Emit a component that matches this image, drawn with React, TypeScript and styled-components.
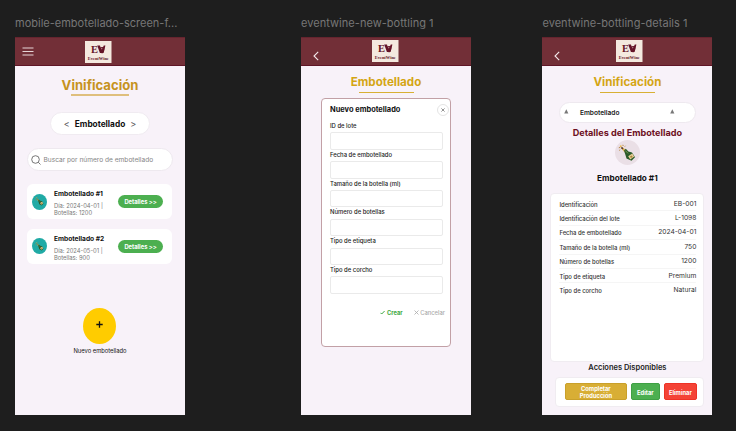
import React from 'react';
import styled, { createGlobalStyle, css } from 'styled-components';

const GlobalStyle = createGlobalStyle`
  * { box-sizing: border-box; }
  body {
    margin: 0;
    background: #1e1e1e;
    font-family: Inter, "Liberation Sans", sans-serif;
    overflow: hidden;
  }
  button { font-family: inherit; border: 0; padding: 0; margin: 0; }
  svg { display: block; flex: none; }
`;

type TextProps = { $size: number; $track?: number };
const type = css<TextProps>`
  font-size: ${p => p.$size}px;
  letter-spacing: ${p => p.$track ?? 0}px;
  white-space: nowrap;
`;

const Canvas = styled.main`
  width: 736px;
  height: 431px;
  display: grid;
  grid-template-columns: 286px 241.4px 171px;
  padding: 15px 0 0 15px;
  background: #1e1e1e;
`;
const Board = styled.section`
  display: flex;
  flex-direction: column;
`;
const BoardName = styled.div<TextProps>`
  ${type}
  height: 22px;
  line-height: 16px;
  color: #777;
`;
const Screen = styled.div`
  width: 170px;
  height: 378px;
  background: #f8f2f9;
  display: flex;
  flex-direction: column;
  align-items: center;
`;
const Header = styled.header<{ $top: number; $logoX: number }>`
  width: 100%;
  height: 29px;
  flex: none;
  display: grid;
  grid-template-columns: ${p => p.$logoX}px 27px 1fr;
  align-items: start;
  padding-top: ${p => p.$top}px;
  background: #722f37;
  border-top: 1px solid #65242e;
  border-bottom: 1px solid #5f1526;
`;
const NavSlot = styled.div<{ $left: number; $top: number }>`
  padding: ${p => p.$top}px 0 0 ${p => p.$left}px;
`;
const Title = styled.h1<TextProps & { $top: number; $color: string }>`
  ${type}
  margin: ${p => p.$top}px 0 0;
  height: 18px;
  line-height: 18px;
  font-weight: 700;
  color: ${p => p.$color};
`;
const Rule = styled.div<{ $w: number; $h: number; $color: string; $top: number }>`
  width: ${p => p.$w}px;
  height: ${p => p.$h}px;
  margin-top: ${p => p.$top}px;
  background: ${p => p.$color};
  flex: none;
`;

/* list screen */
const Switcher = styled.div`
  width: 100px;
  height: 23px;
  margin-top: 16px;
  border: 1px solid #f0ebf1;
  border-radius: 12px;
  background: #fff;
  display: flex;
  align-items: center;
  justify-content: center;
  gap: 5px;
`;
const SwitchText = styled.span<TextProps>`
  ${type}
  font-weight: 700;
  color: #111;
`;
const Chevron = styled.span`
  font-size: 9px;
  color: #555;
`;
const Search = styled.label`
  width: 146px;
  height: 23px;
  margin: 13px 1px 0 0;
  padding-left: 3px;
  border: 1px solid #eee9ef;
  border-radius: 12px;
  background: #fff;
  display: flex;
  align-items: center;
  gap: 3px;
`;
const Placeholder = styled.span<TextProps>`
  ${type}
  color: #858585;
`;
const Card = styled.article<{ $top: number }>`
  width: 145px;
  height: 35px;
  margin: ${p => p.$top}px 1px 0 0;
  padding: 0 9px 0 5px;
  border-radius: 6px;
  background: #fff;
  display: grid;
  grid-template-columns: 22px 1fr 45px;
  align-items: center;
`;
const Avatar = styled.div`
  width: 15px;
  height: 16px;
  border-radius: 50%;
  background: #20aaa5;
  display: flex;
  align-items: center;
  justify-content: center;
`;
const CardText = styled.div`
  align-self: start;
  padding-top: 5px;
`;
const CardTitle = styled.div<TextProps>`
  ${type}
  font-weight: 700;
  line-height: 10px;
  color: #111;
`;
const CardMeta = styled.div<TextProps>`
  ${type}
  line-height: 7px;
  margin-top: 3px;
  color: #777;
`;
const DetailButton = styled.button<TextProps>`
  ${type}
  height: 13px;
  border-radius: 7px;
  background: #4caf50;
  color: #fff;
  font-weight: 700;
`;
const AddButton = styled.button`
  width: 33px;
  height: 36px;
  margin: 44px 1px 0 0;
  border-radius: 50%;
  background: #ffcc00;
  display: flex;
  align-items: center;
  justify-content: center;
  padding-bottom: 3px;
  flex: none;
`;
const AddLabel = styled.div<TextProps>`
  ${type}
  line-height: 8px;
  margin-top: 3px;
  color: #111;
`;

/* form screen */
const Modal = styled.form`
  width: 130px;
  height: 249px;
  margin-top: 5px;
  padding: 4px 0 0 8px;
  border: 1px solid #c2a0a6;
  border-radius: 4px;
  background: #fff;
`;
const ModalHead = styled.div`
  height: 13px;
  display: flex;
  align-items: center;
  justify-content: space-between;
  padding-right: 1px;
`;
const ModalTitle = styled.h2<TextProps>`
  ${type}
  margin: 0;
  font-weight: 700;
  color: #111;
`;
const Close = styled.button`
  width: 12px;
  height: 12px;
  border: 1px solid #e4e4e4;
  border-radius: 50%;
  background: #fff;
  display: flex;
  align-items: center;
  justify-content: center;
`;
const Fields = styled.div`
  padding-top: 6px;
`;
const Field = styled.label`
  display: block;
  height: 28.8px;
`;
const FieldName = styled.div<TextProps>`
  ${type}
  height: 10.4px;
  line-height: 8px;
  font-weight: 500;
  color: #222;
`;
const Input = styled.input`
  display: block;
  width: 113px;
  height: 17.5px;
  padding: 0;
  border: 1px solid #eaeaea;
  border-radius: 2px;
  background: #fff;
`;
const FormActions = styled.div`
  display: flex;
  justify-content: flex-end;
  gap: 11px;
  padding: 14px 5px 0 0;
`;
const FormAction = styled.button<TextProps & { $main?: boolean }>`
  ${type}
  height: 8px;
  line-height: 8px;
  background: none;
  display: flex;
  align-items: center;
  gap: 1.5px;
  color: ${p => (p.$main ? '#3fa944' : '#aaa')};
  font-weight: ${p => (p.$main ? 700 : 500)};
`;

/* details screen */
const Picker = styled.div`
  width: 137px;
  height: 21px;
  margin-top: 9px;
  padding: 0 20px 0 4px;
  border: 1px solid #eee9ef;
  border-radius: 11px;
  background: #fff;
  display: grid;
  grid-template-columns: 16px 1fr 5px;
  align-items: center;
`;
const PickerText = styled.span<TextProps>`
  ${type}
  font-weight: 600;
  color: #222;
`;
const PickerMark = styled.span`
  padding-bottom: 2px;
`;
const Section = styled.h2<TextProps>`
  ${type}
  margin: 2px 0 0;
  line-height: 15px;
  height: 15px;
  font-weight: 700;
  color: #6d1022;
`;
const Badge = styled.div`
  width: 25px;
  height: 25px;
  border-radius: 50%;
  background: #eadfe6;
  display: flex;
  align-items: center;
  justify-content: center;
  flex: none;
`;
const ItemName = styled.h3<TextProps>`
  ${type}
  margin: 7px 0 0;
  height: 12px;
  line-height: 12px;
  font-weight: 700;
  color: #111;
`;
const Panel = styled.dl`
  width: 154px;
  height: 169px;
  margin: 9px 0 0;
  padding: 3px 7px 0 8px;
  border: 1px solid #f0ecf1;
  border-radius: 4px;
  background: #fff;
  flex: none;
`;
const Row = styled.div`
  height: 14.4px;
  display: flex;
  justify-content: space-between;
  align-items: center;
  & + & { box-shadow: 0 -1px 0 -0.2px #f3f3f3; }
`;
const Term = styled.dt<TextProps>`
  ${type}
  font-weight: 500;
  color: #333;
`;
const Value = styled.dd<TextProps>`
  ${type}
  margin: 0;
  padding-bottom: 1px;
  color: #333;
`;
const ActionsTitle = styled.div<TextProps>`
  ${type}
  height: 15px;
  line-height: 12px;
  font-weight: 600;
  color: #222;
`;
const ActionBar = styled.div`
  width: 149px;
  height: 30px;
  margin-left: 4px;
  padding: 5px 6px 0 9px;
  border: 1px solid #f0ecf1;
  border-radius: 4px;
  background: #fff;
  display: grid;
  grid-template-columns: 62px 29px 33px;
  gap: 4px;
`;
const Action = styled.button<TextProps & { $color: string; $edge: string }>`
  ${type}
  height: 17px;
  line-height: 7px;
  padding-top: 1px;
  border: 1px solid ${p => p.$edge};
  border-radius: 2px;
  background: ${p => p.$color};
  color: #fff;
  font-weight: 700;
  white-space: pre-line;
`;

const Logo = () => (
  <svg width="27" height="22" viewBox="0 0 27 22">
    <rect width="26.5" height="22" fill="#f4e9df" />
    <g fill="#651427" fontFamily="'Liberation Serif', serif">
      <text x="6" y="12" fontSize="11" fontWeight="700" textLength="7" lengthAdjust="spacingAndGlyphs">E</text>
      <path d="M12.2 4.4h2.8l1.6 6 .8-3 1.4-3h1.6l-1.8 7.6h-3.7z" />
      <path d="M14.9 6.6c1.3-.8 3.2-.8 4.4 0 .3 2.6-.3 4.3-1.5 4.9v.7h-1.4v-.7c-1.1-.7-1.7-2.3-1.5-4.9z" />
      <path d="M16.2 7.2h1.2l-.6 1.2z" fill="#f4e9df" />
      <text x="2.8" y="18.7" fontSize="4.8" fontWeight="700" textLength="21" lengthAdjust="spacingAndGlyphs">EventWine</text>
    </g>
  </svg>
);
const Menu = () => (
  <svg width="12" height="9" viewBox="0 0 12 9" stroke="#e6d5d7" strokeWidth="1.1">
    <path d="M.5 1h11M.5 4.5h11M.5 8h11" />
  </svg>
);
const Back = () => (
  <svg width="6" height="10" viewBox="0 0 6 10" fill="none" stroke="#f4e9eb" strokeWidth="1.1">
    <path d="M5.2.8 1 5l4.2 4.2" />
  </svg>
);
const Bottle = ({ size }: { size: number }) => (
  <svg width={size} height={size} viewBox="0 0 18 18">
    <path d="m3.6 4.8 1.3-1.2 3.6 3-1.9 2z" fill="#d9ad52" />
    <path d="m6 6.6 1.8-1.8 2.6 2.6 3.6 1.2 3 4.6-3.5 3.6-5-2.4-1.2-4z" fill="#2b5a29" />
    <path d="m10.2 12.2 4-2.8 2 3.1-3.9 3z" fill="#e9cf98" />
    <path d="m11.9 12.6 1.8-1.2 1 1.5-1.8 1.2z" fill="#a8853c" />
    <path d="m7.4 6.6 2.6 2.8" stroke="#8ca865" strokeWidth=".8" />
    <path d="m.8 3.8 1.4-.4M4.9.8l.2 1.2M6.8 2.6l.7-.8M1.2 6.4l1-.6" stroke="#b88745" />
    <circle cx="2.8" cy="2.2" r="1" fill="#eab74c" />
    <path d="m3.4 3.4 1.5 1.5" stroke="#55351f" strokeWidth="1.6" />
  </svg>
);
const Triangle = () => (
  <svg width="5" height="5" viewBox="0 0 5 5"><path d="M2.3.3 4.4 4.4H.2z" fill="#777" /></svg>
);
const Cross = ({ size, color }: { size: number; color: string }) => (
  <svg width={size} height={size} viewBox="0 0 5 5"><path d="m.5.5 4 4m0-4-4 4" stroke={color} strokeWidth=".8" /></svg>
);

const AppHeader = ({ menu, logoX }: { menu?: boolean; logoX: number }) => (
  <Header $top={menu ? 3 : 2} $logoX={logoX}>
    <NavSlot $left={menu ? 7 : 11.5} $top={menu ? 6 : 11}>{menu ? <Menu /> : <Back />}</NavSlot>
    <Logo />
  </Header>
);

const bottlings = [
  { name: 'Embotellado #1', day: '2024-04-01', bottles: 1200 },
  { name: 'Embotellado #2', day: '2024-05-01', bottles: 900 },
];
const fields = ['ID de lote', 'Fecha de embotellado', 'Tamaño de la botella (ml)', 'Número de botellas', 'Tipo de etiqueta', 'Tipo de corcho'];
const details = [
  ['Identificación', 'EB-001'],
  ['Identificación del lote', 'L-1098'],
  ['Fecha de embotellado', '2024-04-01'],
  ['Tamaño de la botella (ml)', '750'],
  ['Número de botellas', '1200'],
  ['Tipo de etiqueta', 'Premium'],
  ['Tipo de corcho', 'Natural'],
];

export default function App() {
  return (
    <>
      <GlobalStyle />
      <Canvas>
        <Board>
          <BoardName $size={11}>mobile-embotellado-screen-f...</BoardName>
          <Screen>
            <AppHeader menu logoX={70} />
            <Title $size={13.1} $top={9.5} $color="#c6931e">Vinificación</Title>
            <Rule $w={58} $h={2} $top={0.5} $color="#dfbf7d" />
            <Switcher>
              <Chevron>&lt;</Chevron>
              <SwitchText $size={8.3}>Embotellado</SwitchText>
              <Chevron>&gt;</Chevron>
            </Switcher>
            <Search>
              <svg width="10" height="10" viewBox="0 0 10 10" fill="none" stroke="#555" strokeWidth=".8">
                <circle cx="4.5" cy="4.5" r="3.8" /><path d="m7.3 7.3 2.2 2.2" />
              </svg>
              <Placeholder $size={6.6}>Buscar por número de embotellado</Placeholder>
            </Search>
            {bottlings.map((b, i) => (
              <Card key={b.name} $top={i ? 9.5 : 13}>
                <Avatar><Bottle size={9} /></Avatar>
                <CardText>
                  <CardTitle $size={6.6}>{b.name}</CardTitle>
                  <CardMeta $size={5.8}>Día: {b.day} |<br />Botellas: {b.bottles}</CardMeta>
                </CardText>
                <DetailButton $size={5.8}>Detalles &gt;&gt;</DetailButton>
              </Card>
            ))}
            <AddButton>
              <svg width="7" height="7" viewBox="0 0 7 7"><path d="M3.5.3v6.4M.3 3.5h6.4" stroke="#111" strokeWidth="1.3" /></svg>
            </AddButton>
            <AddLabel $size={5.8}>Nuevo embotellado</AddLabel>
          </Screen>
        </Board>

        <Board>
          <BoardName $size={11} $track={0.04}>eventwine-new-bottling 1</BoardName>
          <Screen>
            <AppHeader logoX={71} />
            <Title $size={11.6} $top={7} $color="#d4a514">Embotellado</Title>
            <Rule $w={55} $h={1} $top={1} $color="#d8b034" />
            <Modal>
              <ModalHead>
                <ModalTitle $size={7.45}>Nuevo embotellado</ModalTitle>
                <Close type="button"><Cross size={4} color="#555" /></Close>
              </ModalHead>
              <Fields>
                {fields.map(f => (
                  <Field key={f}>
                    <FieldName $size={5.9}>{f}</FieldName>
                    <Input />
                  </Field>
                ))}
              </Fields>
              <FormActions>
                <FormAction type="button" $size={5.8} $main>
                  <svg width="5" height="5" viewBox="0 0 5 5" fill="none" stroke="#3fa944"><path d="m.5 2.8 1.2 1.2L4.6 1" /></svg>
                  Crear
                </FormAction>
                <FormAction type="button" $size={5.8}><Cross size={5} color="#aaa" />Cancelar</FormAction>
              </FormActions>
            </Modal>
          </Screen>
        </Board>

        <Board>
          <BoardName $size={11} $track={0.04}>eventwine-bottling-details 1</BoardName>
          <Screen>
            <AppHeader logoX={74} />
            <Title $size={11.6} $top={7} $color="#d4a514">Vinificación</Title>
            <Rule $w={55} $h={1} $top={1} $color="#d8b034" />
            <Picker>
              <PickerMark><Triangle /></PickerMark>
              <PickerText $size={6.6}>Embotellado</PickerText>
              <PickerMark><Triangle /></PickerMark>
            </Picker>
            <Section $size={9.1}>Detalles del Embotellado</Section>
            <Badge><Bottle size={18} /></Badge>
            <ItemName $size={8.2}>Embotellado #1</ItemName>
            <Panel>
              {details.map(([k, v]) => (
                <Row key={k}>
                  <Term $size={5.9}>{k}</Term>
                  <Value $size={6.7}>{v}</Value>
                </Row>
              ))}
            </Panel>
            <ActionsTitle $size={7.5}>Acciones Disponibles</ActionsTitle>
            <ActionBar>
              <Action $size={5.8} $color="#d8ae35" $edge="#c9a02b">{'Completar\nProducción'}</Action>
              <Action $size={5.8} $color="#4caf50" $edge="#3fa044">Editar</Action>
              <Action $size={5.8} $color="#f44336" $edge="#ee3226">Eliminar</Action>
            </ActionBar>
          </Screen>
        </Board>
      </Canvas>
    </>
  );
}
